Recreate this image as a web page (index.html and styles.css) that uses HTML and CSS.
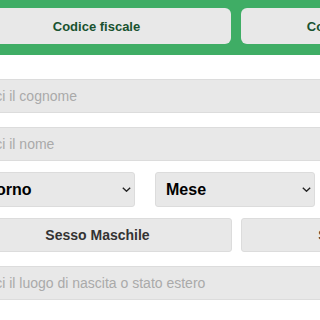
FILE: index.html
```html
<!DOCTYPE html>
<html lang="it">
<head>
    <meta charset="UTF-8">
    <meta name="viewport" content="width=device-width, initial-scale=1.0">
    <title>Calcolo codice fiscale</title>
    <link rel="stylesheet" href="styles.css">
</head>
<body>
    <div class="header">
        <div class="tabs">
            <button class="tab active">Codice fiscale</button>
            <button class="tab">Codice fiscale inverso</button>
        </div>
    </div>
    <form class="form">
        <input type="text" class="field" placeholder="Inserisci il cognome">
        <input type="text" class="field" placeholder="Inserisci il nome">
        <div class="dates">
            <div class="select day">
                <select class="date">
                    <option>Giorno</option>
                </select>
                <svg class="arrow" viewBox="0 0 9 5" width="9" height="5"><path d="M0.8 0.8 L4.5 4.2 L8.2 0.8" fill="none" stroke="#222" stroke-width="1.4"/></svg>
            </div>
            <div class="select">
                <select class="date">
                    <option>Mese</option>
                </select>
                <svg class="arrow" viewBox="0 0 9 5" width="9" height="5"><path d="M0.8 0.8 L4.5 4.2 L8.2 0.8" fill="none" stroke="#222" stroke-width="1.4"/></svg>
            </div>
            <div class="select">
                <select class="date">
                    <option>Anno</option>
                </select>
                <svg class="arrow" viewBox="0 0 9 5" width="9" height="5"><path d="M0.8 0.8 L4.5 4.2 L8.2 0.8" fill="none" stroke="#222" stroke-width="1.4"/></svg>
            </div>
        </div>
        <div class="gender">
            <button type="button" class="sex">Sesso Maschile</button>
            <button type="button" class="sex">Sesso Femminile</button>
        </div>
        <input type="text" class="field" placeholder="Inserisci il luogo di nascita o stato estero">
    </form>
</body>
</html>
```

FILE: styles.css
```css
body {
    margin: 0;
    overflow: hidden;
    background: #fff;
    font-family: "Liberation Sans", Arial, sans-serif;
}

.header {
    background-color: #3fad65;
    padding: 8px 0 11px 0;
}

.tabs {
    display: flex;
    gap: 10px;
    width: 548px;
    margin-left: -38px;
}

.tab {
    flex: 1;
    height: 36px;
    border: none;
    border-radius: 6px;
    background-color: #e8e8e8;
    color: #18522f;
    font-family: inherit;
    font-size: 13px;
    font-weight: bold;
}

.form {
    display: flex;
    flex-direction: column;
    width: 600px;
    margin: 24px 0 0 -58px;
}

.field {
    height: 34px;
    box-sizing: border-box;
    padding: 0 11px;
    margin-bottom: 14px;
    border: 1px solid #dcdcdc;
    border-radius: 3px;
    background-color: #e8e8e8;
    font-family: inherit;
    font-size: 14px;
    color: #333;
}

.field::placeholder {
    color: #aaa;
}

.dates {
    display: flex;
    gap: 20px;
    margin: -3px 0 11px 26px;
}

.select {
    position: relative;
    width: 160px;
    height: 35px;
}

.select.day {
    width: 167px;
}

.date {
    appearance: none;
    width: 100%;
    height: 100%;
    box-sizing: border-box;
    padding: 0 0 0 10px;
    border: 1px solid #dcdcdc;
    border-radius: 3px;
    background-color: #e8e8e8;
    color: #000;
    font-family: inherit;
    font-size: 16px;
    font-weight: bold;
}

.arrow {
    position: absolute;
    right: 4px;
    top: 15px;
    pointer-events: none;
}

.gender {
    display: flex;
    gap: 9px;
    width: 547px;
    margin: 0 0 14px 21px;
}

.sex {
    flex: 1;
    height: 34px;
    border: 1px solid #dcdcdc;
    border-radius: 3px;
    background-color: #e8e8e8;
    color: #333;
    font-family: inherit;
    font-size: 14px;
    font-weight: bold;
}
```
